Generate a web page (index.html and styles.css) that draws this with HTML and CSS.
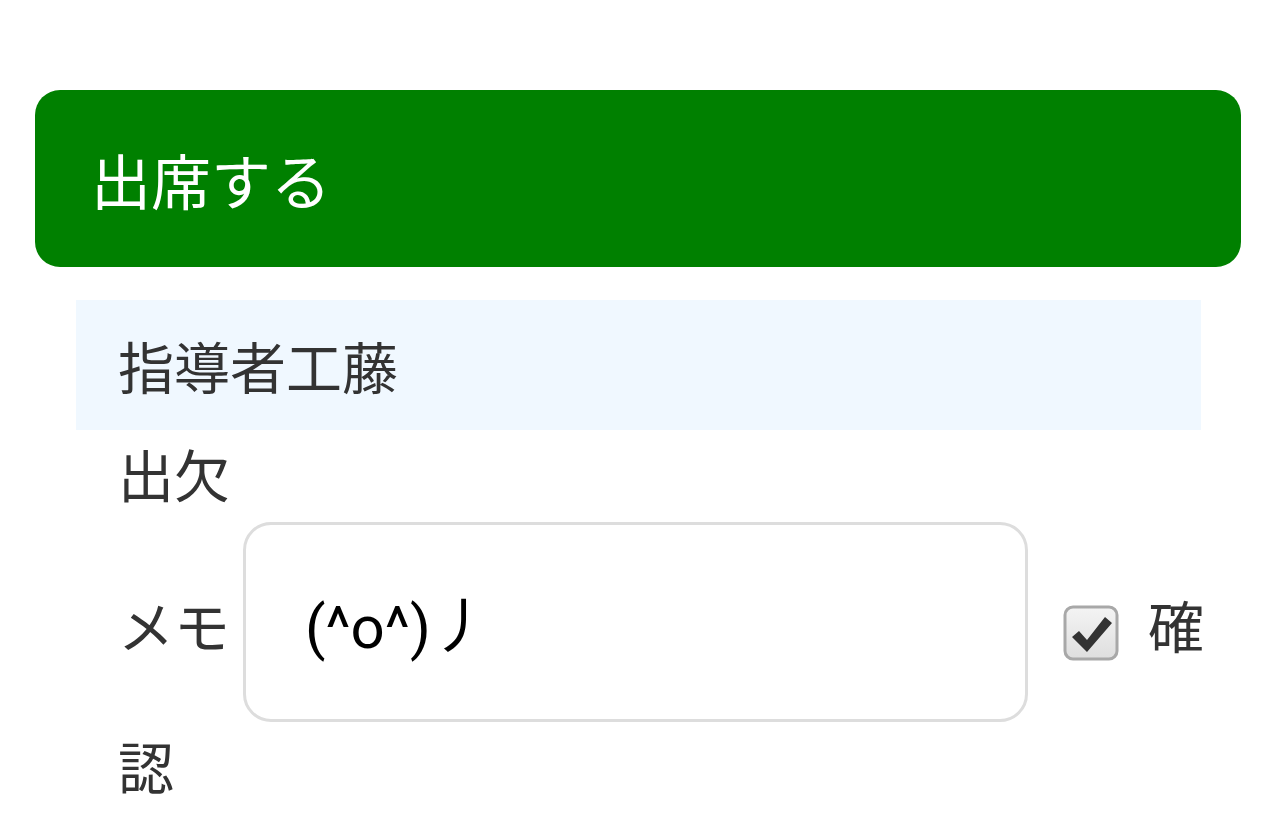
FILE: index.html
```html
<!DOCTYPE html>
<html lang="ja">
<head>
<meta charset="utf-8">
<title>出席</title>
<link rel="stylesheet" href="styles.css">
</head>
<body>
<div class="page">
  <button class="attend">出席する</button>
  <div class="card">
    <div class="head">指導者工藤</div>
    <div class="field">
      <div class="label">出欠</div>
      <div class="memo"><span class="memo-label">メモ</span><span class="input">(^o^)丿</span><span class="check"><svg width="56" height="56" viewBox="0 0 56 56"><defs><linearGradient id="g" x1="0" y1="0" x2="0" y2="1"><stop offset="0" stop-color="#f4f4f4"/><stop offset="1" stop-color="#dedede"/></linearGradient></defs><rect x="2" y="2" width="52" height="52" rx="8" fill="url(#g)" stroke="#a8a8a8" stroke-width="3"/><path d="M9 32 L16 26 L24 35 L42 12 L49 18 L24 47 Z" fill="#333"/></svg></span><span class="confirm">確認</span></div>
    </div>
  </div>
</div>
</body>
</html>
```
FILE: styles.css
```css
body {
  margin: 0;
  background: #fff;
  color: #333;
  font-family: "Noto Sans CJK JP", sans-serif;
}
.page {
  padding: 90px 39px 0 35px;
}
.attend {
  display: block;
  width: 100%;
  height: 177px;
  border: 0;
  border-radius: 25px;
  background: #008000;
  color: #fff;
  font-family: "Noto Sans CJK JP", sans-serif;
  font-size: 60px;
  line-height: 177px;
  text-align: left;
  padding: 0 0 0 56px;
}
.card {
  margin: 33px 0 0 41px;
  width: 1125px;
}
.head {
  background: #f0f8ff;
  height: 130px;
  line-height: 130px;
  font-size: 56px;
  padding-left: 42px;
}
.field {
  padding-left: 42px;
  width: 1110px;
  font-size: 56px;
  line-height: 86px;
}
.memo {
  margin-top: 6px;
}
.memo .input {
  display: inline-block;
  vertical-align: baseline;
  box-sizing: border-box;
  width: 785px;
  height: 200px;
  border: 3px solid #ddd;
  border-radius: 28px;
  margin-left: 13px;
  padding: 12px 0 0 59px;
  line-height: 182px;
  font-size: 60px;
  color: #000;
  font-family: Roboto, "Noto Sans CJK JP", sans-serif;
}
.check {
  display: inline-block;
  vertical-align: middle;
  width: 56px;
  height: 56px;
  margin: 0 29px 0 35px;
}
.check svg {
  display: block;
}
```
